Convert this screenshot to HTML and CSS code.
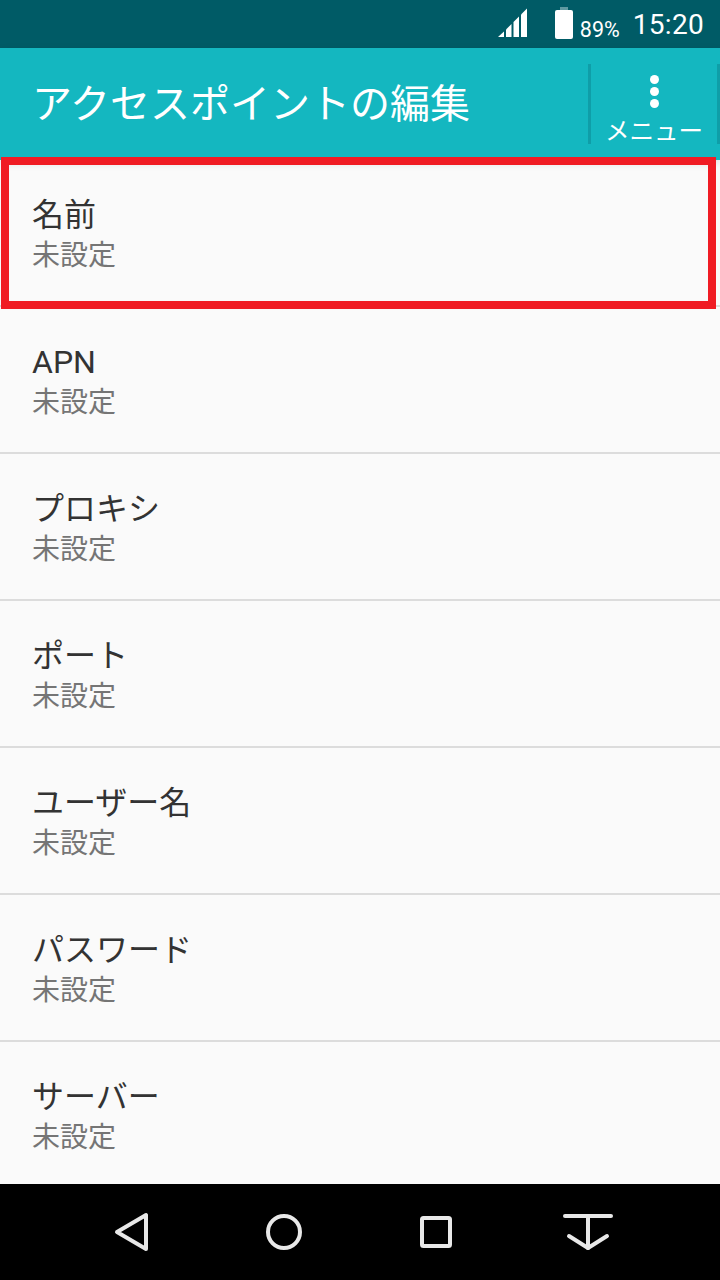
FILE: index.html
```html
<!DOCTYPE html>
<html lang="ja">
<head>
    <meta charset="utf-8">
    <meta name="viewport" content="width=device-width, initial-scale=1">
    <title>アクセスポイントの編集</title>
    <link rel="stylesheet" href="styles.css">
</head>
<body>
    <div class="screen">
        <div class="status">
            <svg class="signal" width="30" height="30" viewBox="0 0 30 30">
                <path d="M0 29 L6 23.5 V29 Z" fill="#fff"/>
                <path d="M8 29 V21.5 L13.5 16 V29 Z" fill="#fff"/>
                <path d="M15.5 29 V14 L21 8.5 V29 Z" fill="#fff"/>
                <path d="M23 29 V6.5 L29 0.5 V29 Z" fill="#fff"/>
            </svg>
            <svg class="battery" width="20" height="32" viewBox="0 0 20 32">
                <rect x="6" y="0" width="8" height="4" fill="#5f9aa1"/>
                <rect x="1" y="3" width="18" height="29" rx="2" fill="#fff"/>
            </svg>
            <span class="percent">89%</span>
            <span class="clock">15:20</span>
        </div>

        <div class="appbar">
            <h1 class="title">アクセスポイントの編集</h1>
            <div class="menu">
                <div class="dots"><i></i><i></i><i></i></div>
                <span class="menu-label">メニュー</span>
            </div>
        </div>

        <div class="list">
            <div class="row"><div class="row-title">名前</div><div class="row-sub">未設定</div></div>
            <div class="row"><div class="row-title">APN</div><div class="row-sub">未設定</div></div>
            <div class="row"><div class="row-title">プロキシ</div><div class="row-sub">未設定</div></div>
            <div class="row"><div class="row-title">ポート</div><div class="row-sub">未設定</div></div>
            <div class="row"><div class="row-title">ユーザー名</div><div class="row-sub">未設定</div></div>
            <div class="row"><div class="row-title">パスワード</div><div class="row-sub">未設定</div></div>
            <div class="row"><div class="row-title">サーバー</div><div class="row-sub">未設定</div></div>
            <div class="highlight"></div>
        </div>

        <div class="navbar">
            <svg width="36" height="44" viewBox="0 0 36 44" fill="none" stroke="#e8e8e8" stroke-width="4" stroke-linejoin="round" stroke-linecap="round">
                <path d="M3 22 L32 5 V39 Z"/>
            </svg>
            <svg class="nav-home" width="38" height="38" viewBox="0 0 38 38" fill="none" stroke="#e8e8e8" stroke-width="4">
                <circle cx="19" cy="19" r="16"/>
            </svg>
            <svg class="nav-recent" width="34" height="34" viewBox="0 0 34 34" fill="none" stroke="#e8e8e8" stroke-width="4" stroke-linejoin="round">
                <rect x="3" y="3" width="28" height="28" rx="1.5"/>
            </svg>
            <svg class="nav-hide" width="52" height="40" viewBox="0 0 52 40" fill="none" stroke="#e8e8e8" stroke-width="4" stroke-linecap="round" stroke-linejoin="round">
                <path d="M3 4 H49"/>
                <path d="M26 4 V36"/>
                <path d="M7 24 L26 36 L45 24"/>
            </svg>
        </div>
    </div>
</body>
</html>
```

FILE: styles.css
```css
html, body {
    margin: 0;
    padding: 0;
}
body {
    font-family: Roboto, "Noto Sans CJK JP", sans-serif;
    background-color: #fafafa;
}
.screen {
    width: 720px;
    height: 1280px;
    display: flex;
    flex-direction: column;
    overflow: hidden;
}
.status {
    height: 48px;
    flex: none;
    background-color: #005b66;
    color: #fff;
    display: flex;
    align-items: center;
    justify-content: flex-end;
    padding-right: 16px;
    box-sizing: border-box;
}
.signal {
    margin-right: 26px;
    margin-top: -3px;
}
.battery {
    margin-right: 6px;
    margin-top: -2px;
}
.percent {
    font-size: 21.5px;
    margin-top: 11px;
    margin-right: 13px;
    line-height: 24px;
}
.clock {
    font-size: 28px;
    line-height: 34px;
    letter-spacing: 0.3px;
    margin-top: 2px;
}
.appbar {
    height: 112px;
    flex: none;
    background-color: #14b7c0;
    color: #fff;
    display: flex;
    align-items: center;
    justify-content: space-between;
    box-sizing: border-box;
    padding-left: 34px;
    position: relative;
    box-shadow: 0 3px 8px rgba(0, 0, 0, 0.12);
}
.title {
    margin: 0;
    font-size: 40px;
    font-weight: 400;
    line-height: 48px;
    margin-top: 1px;
    margin-left: -2px;
    white-space: nowrap;
}
.menu {
    width: 132px;
    height: 80px;
    border-left: 3px solid #0f9ea8;
    border-right: 3px solid #0f9ea8;
    box-sizing: border-box;
    display: flex;
    flex-direction: column;
    align-items: center;
}
.dots {
    display: flex;
    flex-direction: column;
    gap: 3px;
    margin-top: 11px;
}
.dots i {
    display: block;
    width: 9px;
    height: 9px;
    border-radius: 50%;
    background-color: #fff;
}
.menu-label {
    font-size: 24.5px;
    line-height: 30px;
    margin-top: 9px;
    white-space: nowrap;
}
.list {
    flex: 1;
    min-height: 0;
    position: relative;
}
.row {
    height: 147px;
    box-sizing: border-box;
    border-bottom: 2px solid #dcdcdc;
    padding: 34px 0 0 32px;
}
.row-title {
    font-size: 32px;
    line-height: 42px;
    color: #333;
}
.row-sub {
    font-size: 28px;
    line-height: 40px;
    color: #757575;
}
.highlight {
    position: absolute;
    left: 1px;
    top: -3px;
    width: 715px;
    height: 152px;
    box-sizing: border-box;
    border: 8px solid #f01c24;
}
.navbar {
    height: 96px;
    flex: none;
    background-color: #000;
    display: flex;
    align-items: center;
    box-sizing: border-box;
    padding-left: 114px;
    position: relative;
}
.nav-home {
    margin-left: 115px;
}
.nav-recent {
    margin-left: 116px;
}
.nav-hide {
    margin-left: 109px;
}
```
